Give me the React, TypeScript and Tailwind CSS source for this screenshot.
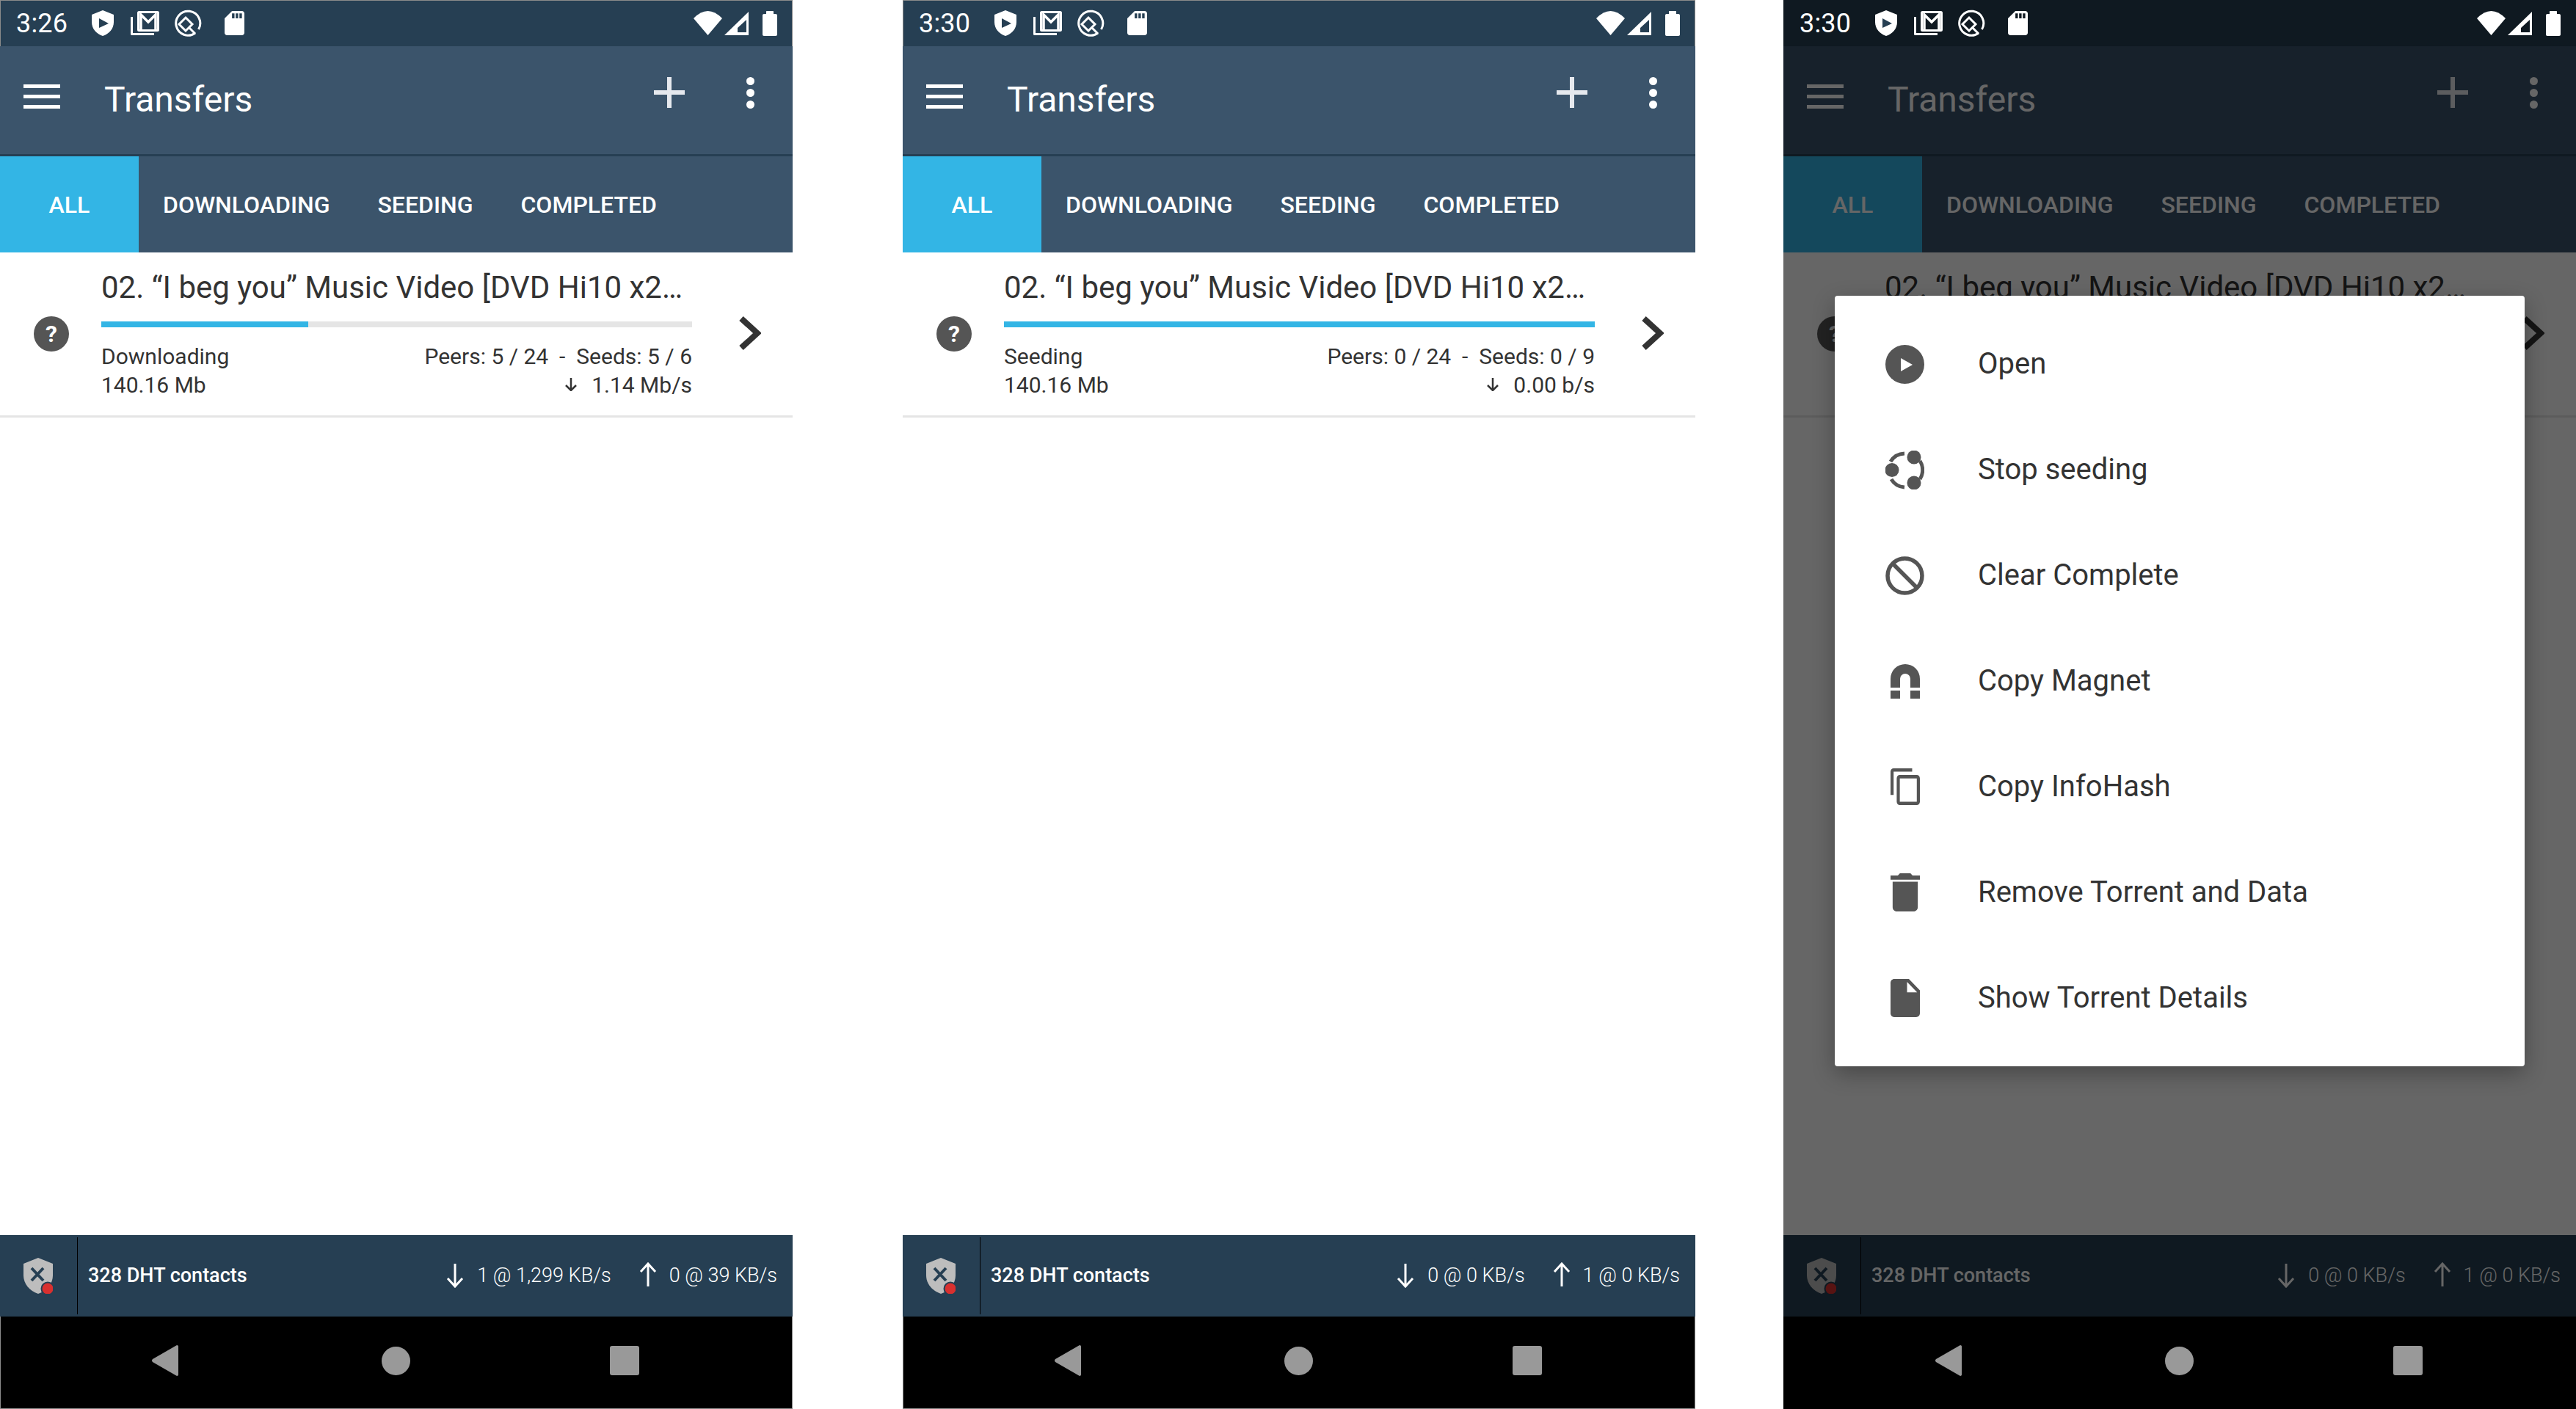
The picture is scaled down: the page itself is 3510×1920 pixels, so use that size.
import type { ReactNode } from "react";

type PhoneProps = {
  time: string;
  status: string;
  progress: number;
  peers: string;
  seeds: string;
  rate: string;
  down: string;
  up: string;
  framed?: boolean;
  dialog?: boolean;
  className?: string;
};

function ShieldPlay() {
  return (
    <svg width="30" height="35" viewBox="0 0 30 35" className="shrink-0">
      <path d="M15 0 L30 6 V16 C30 25 24 32 15 35 C6 32 0 25 0 16 V6 Z" fill="#fff" />
      <path d="M10 11 L23 18 L10 24 Z" fill="#263f53" />
    </svg>
  );
}

function MailStack() {
  return (
    <svg width="39" height="33" viewBox="0 0 39 33" fill="none" stroke="#fff" className="ml-[23px] shrink-0">
      <path d="M1.5 8 V31.5 H32" strokeWidth="3" strokeLinejoin="round" />
      <rect x="10.5" y="1.5" width="27" height="25" strokeWidth="3" rx="1" />
      <path d="M14 25 V5 L24 15 L34 5 V25" strokeWidth="3.5" />
    </svg>
  );
}

function QRing() {
  return (
    <svg width="37" height="37" viewBox="0 0 37 37" fill="none" stroke="#fff" strokeWidth="3" className="ml-[21px] shrink-0">
      <path d="M28 32 A16.5 16.5 0 1 1 32.5 27" />
      <path d="M15 11 L24 20 L15 29 L6 20 Z" />
      <path d="M20 25 L28 33" />
    </svg>
  );
}

function SdCard() {
  return (
    <svg width="27" height="33" viewBox="4 2 16 20" preserveAspectRatio="none" fill="#fff" className="ml-[31px] shrink-0">
      <path d="M18 2h-8L4.02 8 4 20c0 1.1.9 2 2 2h12c1.100 0 2-.9 2-2V4c0-1.100-.9-2-2-2zm-6 6h-2V4h2v4zm3 0h-2V4h2v4zm3 0h-2V4h2v4z" />
    </svg>
  );
}

function StatusBar({ time, dim }: { time: string; dim?: boolean }) {
  return (
    <div className={`h-[63px] shrink-0 flex items-center pl-[22px] pr-[21px] text-white ${dim ? "bg-[#0f1921]" : "bg-[#263f53]"}`}>
      <span className="w-[69px] text-[36px] leading-none tracking-[0.2px]">{time}</span>
      <div className="ml-[34px] flex items-center">
        <ShieldPlay />
        <MailStack />
        <QRing />
        <SdCard />
      </div>
      <div className="ml-auto flex items-center">
        <svg width="39" height="33" viewBox="0 0 39 33" fill="#fff" className="shrink-0">
          <path d="M0 10 Q19.500 -10 39 10 L19.500 33 Z" />
        </svg>
        <svg width="33" height="32" viewBox="0 0 33 32" fill="#fff" fillRule="evenodd" className="ml-[3px] shrink-0">
          <path d="M0 32 L33 0 V32 Z M18 28 H30 V11 L18 22 Z" />
        </svg>
        <svg width="20" height="34" viewBox="0 0 20 34" fill="#fff" className="ml-[19px] shrink-0">
          <path d="M5 4 V1 C5 .4 5.400 0 6 0 H14 C14.600 0 15 .4 15 1 V4 H18 C19.100 4 20 4.900 20 6 V32 C20 33.100 19.100 34 18 34 H2 C.9 34 0 33.100 0 32 V6 C0 4.900 .9 4 2 4 Z" />
        </svg>
      </div>
    </div>
  );
}

function Toolbar() {
  return (
    <div className="h-[147px] shrink-0 flex items-center bg-[#3b546b] pl-[32px] pr-[52px] text-white">
      <div className="flex w-[50px] flex-col gap-[9px] pb-[10px]">
        <div className="h-[5px] bg-white" />
        <div className="h-[5px] bg-white" />
        <div className="h-[5px] bg-white" />
      </div>
      <span className="ml-[60px] pb-[1px] text-[48px] leading-none">Transfers</span>
      <svg width="42" height="42" viewBox="0 0 42 42" fill="#e6e9ee" className="ml-auto mb-[21px] shrink-0">
        <path d="M18 0 H24 V18 H42 V24 H24 V42 H18 V24 H0 V18 H18 Z" />
      </svg>
      <div className="ml-[84px] mb-[21px] flex flex-col gap-[5px]">
        <div className="h-[11px] w-[11px] rounded-full bg-white" />
        <div className="h-[11px] w-[11px] rounded-full bg-white" />
        <div className="h-[11px] w-[11px] rounded-full bg-white" />
      </div>
    </div>
  );
}

function Tabs() {
  return (
    <div className="h-[131px] shrink-0 flex items-stretch bg-[#3b546b] text-[32px] font-medium text-white">
      <div className="flex w-[189px] items-center justify-center bg-[#33b5e5]">ALL</div>
      <div className="flex items-center pl-[33px]">DOWNLOADING</div>
      <div className="flex items-center pl-[65px]">SEEDING</div>
      <div className="flex items-center pl-[65px]">COMPLETED</div>
    </div>
  );
}

function TransferRow({ status, progress, peers, seeds, rate }: Pick<PhoneProps, "status" | "progress" | "peers" | "seeds" | "rate">) {
  return (
    <div className="h-[225px] flex items-center border-b-[3px] border-[#e5e5e5] bg-white pl-[46px]">
      <div className="flex h-[48px] w-[48px] shrink-0 items-center justify-center rounded-full bg-[#555] text-[32px] font-bold leading-none text-white">?</div>
      <div className="ml-[44px] w-[805px] shrink-0 text-[#333]">
        <div className="truncate text-[42px] leading-[50px]">02. “I beg you” Music Video [DVD Hi10 x2…</div>
        <div className="mt-[21px] h-[8px] bg-[#e5e5e5]">
          <div className="h-full bg-[#33b5e5]" style={{ width: `${progress}%` }} />
        </div>
        <div className="mt-[20px] flex justify-between text-[30px] leading-[39px]">
          <span>{status}</span>
          <span className="whitespace-pre">{`Peers: ${peers}  -  Seeds: ${seeds}`}</span>
        </div>
        <div className="flex justify-between text-[30px] leading-[39px]">
          <span>140.16 Mb</span>
          <span className="flex items-center">
            <svg width="18" height="18" viewBox="0 0 18 18" fill="none" stroke="#333" strokeWidth="2.5" className="mr-[19px]">
              <path d="M9 0 V17 M2 10 L9 17 L16 10" />
            </svg>
            {rate}
          </span>
        </div>
      </div>
      <svg width="30" height="46" viewBox="0 0 30 46" fill="none" stroke="#333" strokeWidth="8" className="ml-[64px] mb-[2px] shrink-0">
        <path d="M3 3 L25 23 L3 43" />
      </svg>
    </div>
  );
}

function BottomBar({ down, up }: { down: string; up: string }) {
  return (
    <div className="h-[111px] shrink-0 flex items-stretch bg-[#263f53] py-[3px] pl-[32px] pr-[21px] text-white">
      <svg width="40" height="49" viewBox="0 0 40 49" className="my-auto shrink-0">
        <path d="M20 0 L40 8 V24 C40 35 32 45 20 49 C8 45 0 35 0 24 V8 Z" fill="#bdbdbd" />
        <path d="M11 14 L27 31 M27 14 L11 31" stroke="#263f53" strokeWidth="4" />
        <circle cx="33" cy="42" r="9.500" fill="#263f53" />
        <circle cx="33" cy="42" r="7.500" fill="#d9302f" />
      </svg>
      <div className="ml-[33px] w-px shrink-0 bg-black" />
      <span className="ml-[14px] self-center text-[27px] font-medium">328 DHT contacts</span>
      <div className="ml-auto flex items-center text-[27px] font-light">
        <svg width="24" height="33" viewBox="0 0 24 33" fill="none" stroke="#fff" strokeWidth="3" className="shrink-0">
          <path d="M12 0 V31 M2 20 L12 31 L22 20" />
        </svg>
        <span className="ml-[18px]">{down}</span>
        <svg width="24" height="33" viewBox="0 0 24 33" fill="none" stroke="#fff" strokeWidth="3" className="ml-[38px] mb-[4px] shrink-0">
          <path d="M12 33 V2 M2 13 L12 2 L22 13" />
        </svg>
        <span className="ml-[17px]">{up}</span>
      </div>
    </div>
  );
}

function NavBar() {
  return (
    <div className="h-[126px] shrink-0 flex items-center bg-black pb-[6px] pl-[207px]">
      <svg width="36" height="42" viewBox="0 0 36 42" fill="#999" className="shrink-0">
        <path d="M34 0 C35.200 0 36 .8 36 2 V40 C36 41.200 35.200 42 34 42 L1 23 C-.3 22 -.3 20 1 19 Z" />
      </svg>
      <div className="ml-[277px] h-[39px] w-[39px] shrink-0 rounded-full bg-[#999]" />
      <div className="ml-[272px] h-[40px] w-[40px] shrink-0 rounded-[3px] bg-[#999]" />
    </div>
  );
}

const MENU: { label: string; icon: ReactNode }[] = [
  {
    label: "Open",
    icon: (
      <svg width="53" height="53" viewBox="0 0 53 53">
        <circle cx="26.500" cy="26.500" r="26.500" fill="#555" />
        <path d="M21 18 L37 27 L21 36 Z" fill="#fff" />
      </svg>
    ),
  },
  {
    label: "Stop seeding",
    icon: (
      <svg width="53" height="53" viewBox="0 0 53 53" fill="#555">
        <path d="M7 15 A23 23 0 0 1 26 4 M47 14 A23 23 0 0 1 47 39 M26 50 A23 23 0 0 1 8 39" fill="none" stroke="#555" strokeWidth="5" />
        <circle cx="39" cy="9" r="9.500" />
        <circle cx="9" cy="26.500" r="9.500" />
        <circle cx="39" cy="44" r="9.500" />
      </svg>
    ),
  },
  {
    label: "Clear Complete",
    icon: (
      <svg width="53" height="53" viewBox="0 0 53 53" fill="none" stroke="#555" strokeWidth="5.500">
        <circle cx="26.500" cy="26.500" r="23.500" />
        <path d="M10 10 L43 43" />
      </svg>
    ),
  },
  {
    label: "Copy Magnet",
    icon: (
      <svg width="40" height="47" viewBox="0 0 40 47" fill="#555">
        <path d="M0 20 A20 20 0 0 1 40 20 V32 H27 V20 A7 7 0 0 0 13 20 V32 H0 Z" />
        <path d="M0 36 H13 V47 H0 Z M27 36 H40 V47 H27 Z" />
      </svg>
    ),
  },
  {
    label: "Copy InfoHash",
    icon: (
      <svg width="40" height="50" viewBox="2 1 19 22" preserveAspectRatio="none" fill="#555">
        <path d="M16 1H4c-1.100 0-2 .9-2 2v14h2V3h12V1zm3 4H8c-1.100 0-2 .9-2 2v14c0 1.100.9 2 2 2h11c1.100 0 2-.9 2-2V7c0-1.100-.9-2-2-2zm0 16H8V7h11v14z" />
      </svg>
    ),
  },
  {
    label: "Remove Torrent and Data",
    icon: (
      <svg width="40" height="52" viewBox="5 3 14 18" preserveAspectRatio="none" fill="#555">
        <path d="M6 19c0 1.100.9 2 2 2h8c1.100 0 2-.9 2-2V7H6v12zM19 4h-3.500l-1-1h-5l-1 1H5v2h14V4z" />
      </svg>
    ),
  },
  {
    label: "Show Torrent Details",
    icon: (
      <svg width="40" height="52" viewBox="4 2 16 20" preserveAspectRatio="none" fill="#555">
        <path d="M6 2c-1.100 0-1.990.9-1.990 2L4 20c0 1.100.89 2 1.990 2H18c1.100 0 2-.9 2-2V8l-6-6H6zm7 7V3.500L18.500 9H13z" />
      </svg>
    ),
  },
];

function ContextMenu() {
  return (
    <div className="absolute left-[70px] top-[340px] w-[940px] rounded-[4px] bg-white py-[21px] shadow-[0_10px_30px_rgba(0,0,0,0.3)]">
      {MENU.map((item) => (
        <div key={item.label} className="flex h-[144px] items-center pl-[69px] text-[40px] text-[#333]">
          <div className="flex w-[53px] shrink-0 items-center justify-center">{item.icon}</div>
          <span className="ml-[73px]">{item.label}</span>
        </div>
      ))}
    </div>
  );
}

function Phone({ time, status, progress, peers, seeds, rate, down, up, framed, dialog, className }: PhoneProps) {
  return (
    <div className={`flex h-[1920px] w-[1080px] shrink-0 flex-col bg-white ${framed ? "outline outline-1 -outline-offset-1 outline-[#8a8a8a]" : ""} ${className ?? ""}`}>
      <StatusBar time={time} dim={dialog} />
      <div className="relative flex min-h-0 flex-1 flex-col">
        <Toolbar />
        <div className="h-[3px] shrink-0 bg-[#263f53]" />
        <Tabs />
        <div className="flex-1 bg-white">
          <TransferRow status={status} progress={progress} peers={peers} seeds={seeds} rate={rate} />
        </div>
        <BottomBar down={down} up={up} />
        {dialog && (
          <>
            <div className="absolute inset-0 bg-black/60" />
            <ContextMenu />
          </>
        )}
      </div>
      <NavBar />
    </div>
  );
}

export default function App() {
  return (
    <div className="flex h-[1920px] w-[3510px] overflow-hidden bg-white font-[Roboto,sans-serif]">
      <Phone time="3:26" status="Downloading" progress={35} peers="5 / 24" seeds="5 / 6" rate="1.14 Mb/s" down="1 @ 1,299 KB/s" up="0 @ 39 KB/s" framed />
      <Phone time="3:30" status="Seeding" progress={100} peers="0 / 24" seeds="0 / 9" rate="0.00 b/s" down="0 @ 0 KB/s" up="1 @ 0 KB/s" framed className="ml-[150px]" />
      <Phone time="3:30" status="Seeding" progress={100} peers="0 / 24" seeds="0 / 9" rate="0.00 b/s" down="0 @ 0 KB/s" up="1 @ 0 KB/s" dialog className="ml-[120px]" />
    </div>
  );
}
